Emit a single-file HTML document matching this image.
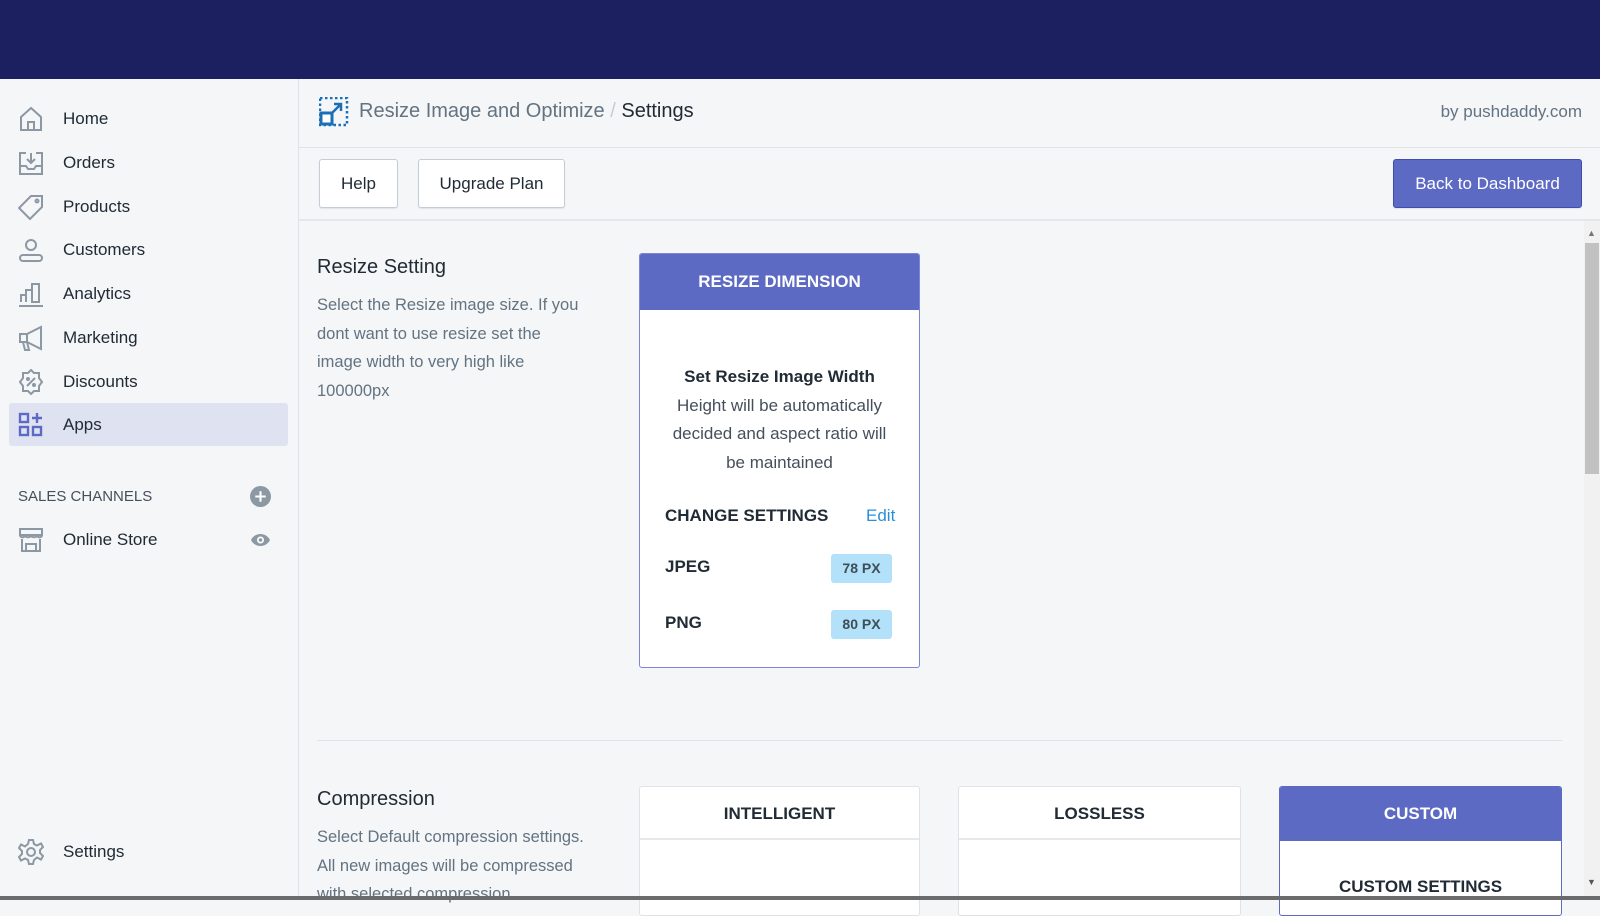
<!DOCTYPE html>
<html><head><meta charset="utf-8"><style>
*{box-sizing:border-box;margin:0;padding:0}
body{width:1600px;height:900px;overflow:hidden;background:#f4f6f8;font-family:"Liberation Sans",sans-serif;color:#212b36;position:relative}
.top{position:absolute;left:0;top:0;width:1600px;height:79px;background:#1c2060}
.side{position:absolute;left:0;top:79px;width:299px;height:821px;background:#f4f6f8;border-right:1px solid #dfe3e8}
.nav{position:absolute;left:0;font-size:17px;color:#212b36}
.nav svg{position:absolute;left:18px;top:-13px}
.nav span{position:absolute;left:63px;top:-10px;white-space:nowrap}
.abs{position:absolute;white-space:nowrap}
.btn{position:absolute;border:1px solid #c4cdd5;border-radius:3px;background:#fff;font-size:17px;text-align:center;line-height:47px;box-shadow:0 1px 1px rgba(0,0,0,.08)}
.card{position:absolute;background:#fff;border:1px solid #dfe3e8;border-radius:3px;overflow:hidden}
.card .hd{height:53px;line-height:53px;text-align:center;font-weight:bold;font-size:17px;border-bottom:2px solid #e6e8eb}
.badge{position:absolute;background:#b4e1fa;border-radius:3px;font-size:14px;font-weight:bold;color:#3e4e57;text-align:center;line-height:29px;width:61px;height:29px}
.desc{color:#637381;font-size:16.5px;line-height:28.5px}
</style></head><body>
<div class="top"></div>
<div class="side">
</div>
<div style="position:absolute;left:9px;top:403px;width:279px;height:43px;background:#dfe3f1;border-radius:3px"></div>

<div class="nav" style="top:119px"><svg width="26" height="26" viewBox="0 0 26 26" fill="none" stroke="#8c98a4" stroke-width="2"><path d="M3 11L13 2l10 9v13H3z M10 24v-8h6v8"/></svg><span>Home</span></div>
<div class="nav" style="top:163px"><svg width="26" height="26" viewBox="0 0 26 26" fill="none" stroke="#8c98a4" stroke-width="2"><path d="M8 3H2v21h22V3h-6 M2 16h6l2 3h6l2-3h6 M13 3v10 M9 9l4 4 4-4"/></svg><span>Orders</span></div>
<div class="nav" style="top:207px"><svg width="26" height="26" viewBox="0 0 26 26" fill="none" stroke="#8c98a4" stroke-width="2"><path d="M13 2h11v11L12 25 1 14z"/><circle cx="19" cy="7" r="1.5"/></svg><span>Products</span></div>
<div class="nav" style="top:250px"><svg width="26" height="26" viewBox="0 0 26 26" fill="none" stroke="#8c98a4" stroke-width="2"><circle cx="13" cy="8" r="5"/><path d="M5 24h16a3 3 0 0 0 0-6H5a3 3 0 0 0 0 6z"/></svg><span>Customers</span></div>
<div class="nav" style="top:294px"><svg width="26" height="26" viewBox="0 0 26 26" fill="none" stroke="#8c98a4" stroke-width="2"><path d="M1 25h24 M3 21v-7h5v7 M8 21V9h6v12 M14 21V3h7v18z"/></svg><span>Analytics</span></div>
<div class="nav" style="top:338px"><svg width="26" height="26" viewBox="0 0 26 26" fill="none" stroke="#8c98a4" stroke-width="2"><path d="M2 9h7l14-7v22L9 17H2z M9 9v8 M5 17l2 8h4l-2-8"/></svg><span>Marketing</span></div>
<div class="nav" style="top:382px"><svg width="26" height="26" viewBox="0 0 26 26" fill="none" stroke="#8c98a4" stroke-width="2"><path d="M13 1l3 3h5v5l3 4-3 4v5h-5l-3 3-3-3H5v-5l-3-4 3-4V4h5z M9 17l8-8"/><circle cx="10" cy="10" r="1"/><circle cx="16" cy="16" r="1"/></svg><span>Discounts</span></div>
<div class="nav" style="top:425px"><svg width="26" height="26" viewBox="0 0 26 26" fill="none" stroke="#5c6ac4" stroke-width="2.4"><rect x="2" y="2" width="8" height="8"/><rect x="2" y="15" width="8" height="8"/><rect x="15" y="15" width="8" height="8"/><path d="M19 1v10 M14 6h10"/></svg><span>Apps</span></div>

<div class="abs" style="left:18px;top:488px;font-size:15px;color:#454f5b">SALES CHANNELS</div>
<svg class="abs" style="left:250px;top:486px" width="21" height="21" viewBox="0 0 20 20"><circle cx="10" cy="10" r="10" fill="#8c98a4"/><path d="M10 5v10M5 10h10" stroke="#fff" stroke-width="2"/></svg>
<div class="nav" style="top:540px"><svg width="26" height="26" viewBox="0 0 26 26" fill="none" stroke="#8c98a4" stroke-width="2"><path d="M2 2h22v6H2z M2 8c0 3 5 3 5 0 0 3 6 3 6 0 0 3 6 3 6 0 0 3 5 3 5 0 M4 12v12h18V12 M8 24v-7h10v7"/></svg><span>Online Store</span></div>
<svg class="abs" style="left:250px;top:532px" width="21" height="16" viewBox="0 0 21 16"><path d="M1 8c4-8 15-8 19 0-4 8-15 8-19 0z" fill="#8c98a4"/><circle cx="10.5" cy="8" r="3.5" fill="#fff"/><circle cx="10.5" cy="8" r="1.8" fill="#8c98a4"/></svg>
<div class="nav" style="top:852px"><svg width="26" height="26" viewBox="0 0 26 26" fill="none" stroke="#8c98a4" stroke-width="2"><path d="M11 1h4l1 4 3 1.5 4-2 2 3.5-3 3v3l3 3-2 3.5-4-2L16 21l-1 4h-4l-1-4-3-1.5-4 2-2-3.5 3-3v-3l-3-3 2-3.5 4 2L10 5z"/><circle cx="13" cy="13" r="4"/></svg><span>Settings</span></div>

<!-- header -->
<svg class="abs" style="left:319px;top:97px" width="30" height="30" viewBox="0 0 30 30"><rect x="1" y="1" width="27" height="27" fill="none" stroke="#1a6fb5" stroke-width="2.5" stroke-dasharray="2.5 2.5"/><rect x="2" y="16" width="11" height="11" fill="#fff" stroke="#1a6fb5" stroke-width="3"/><path d="M13 16l9-9 M15 7h7v7" stroke="#1a6fb5" stroke-width="2.5" fill="none"/></svg>
<div class="abs" style="left:359px;top:100px;font-size:20px;color:#637381">Resize Image and Optimize <span style="color:#c4cdd5">/</span> <span style="color:#212b36">Settings</span></div>
<div class="abs" style="right:18px;top:102px;font-size:17px;color:#637381">by pushdaddy.com</div>
<div class="abs" style="left:299px;top:147px;width:1301px;height:1px;background:#dfe3e8"></div>
<div class="btn" style="left:319px;top:159px;width:79px;height:49px">Help</div>
<div class="btn" style="left:418px;top:159px;width:147px;height:49px">Upgrade Plan</div>
<div class="btn" style="left:1393px;top:159px;width:189px;height:49px;background:#5c6ac4;border-color:#3f4eae;color:#fff">Back to Dashboard</div>
<div class="abs" style="left:299px;top:219px;width:1301px;height:2px;background:#e3e6ea"></div>

<!-- scrollbar -->
<div class="abs" style="left:1584px;top:221px;width:16px;height:676px;background:#f1f1f1"></div>
<div class="abs" style="left:1585px;top:243px;width:14px;height:231px;background:#c1c1c1"></div>
<div class="abs" style="left:1587px;top:228px;font-size:9px;color:#777">▲</div>
<div class="abs" style="left:1587px;top:877px;font-size:9px;color:#555">▼</div>

<!-- resize setting -->
<div class="abs" style="left:317px;top:256px;font-size:20px">Resize Setting</div>
<div class="abs desc" style="left:317px;top:291px">Select the Resize image size. If you<br>dont want to use resize set the<br>image width to very high like<br>100000px</div>
<div class="card" style="left:639px;top:253px;width:281px;height:415px;border-color:#7b86d4">
<div class="hd" style="background:#5c6ac4;color:#fff;border:0;height:56px;line-height:56px">RESIZE DIMENSION</div>
<div class="abs" style="left:0;width:279px;top:109px;text-align:center;font-size:17px;line-height:28.5px;color:#454f5b;white-space:normal"><b style="color:#212b36">Set Resize Image Width</b><br>Height will be automatically<br>decided and aspect ratio will<br>be maintained</div>
<div class="abs" style="left:25px;top:252px;font-size:17px;font-weight:bold">CHANGE SETTINGS</div>
<div class="abs" style="left:226px;top:252px;font-size:17px;color:#2b8fd6">Edit</div>
<div class="abs" style="left:25px;top:303px;font-size:17px;font-weight:bold">JPEG</div>
<div class="badge" style="left:191px;top:300px">78 PX</div>
<div class="abs" style="left:25px;top:359px;font-size:17px;font-weight:bold">PNG</div>
<div class="badge" style="left:191px;top:356px">80 PX</div>
</div>
<div class="abs" style="left:317px;top:740px;width:1245px;height:1px;background:#dfe3e8"></div>

<!-- compression -->
<div class="abs" style="left:317px;top:788px;font-size:20px">Compression</div>
<div class="abs desc" style="left:317px;top:823px">Select Default compression settings.<br>All new images will be compressed<br>with selected compression</div>
<div class="card" style="left:639px;top:786px;width:281px;height:130px"><div class="hd">INTELLIGENT</div></div>
<div class="card" style="left:958px;top:786px;width:283px;height:130px"><div class="hd">LOSSLESS</div></div>
<div class="card" style="left:1279px;top:786px;width:283px;height:130px;border-color:#5c6ac4"><div class="hd" style="background:#5c6ac4;color:#fff;border:0;height:54px;line-height:54px">CUSTOM</div>
<div class="abs" style="left:0;width:281px;top:90px;text-align:center;font-size:17px;font-weight:bold">CUSTOM SETTINGS</div></div>

<div class="abs" style="left:0;top:896px;width:1600px;height:4px;background:#6b6b6b"></div>
</body></html>
